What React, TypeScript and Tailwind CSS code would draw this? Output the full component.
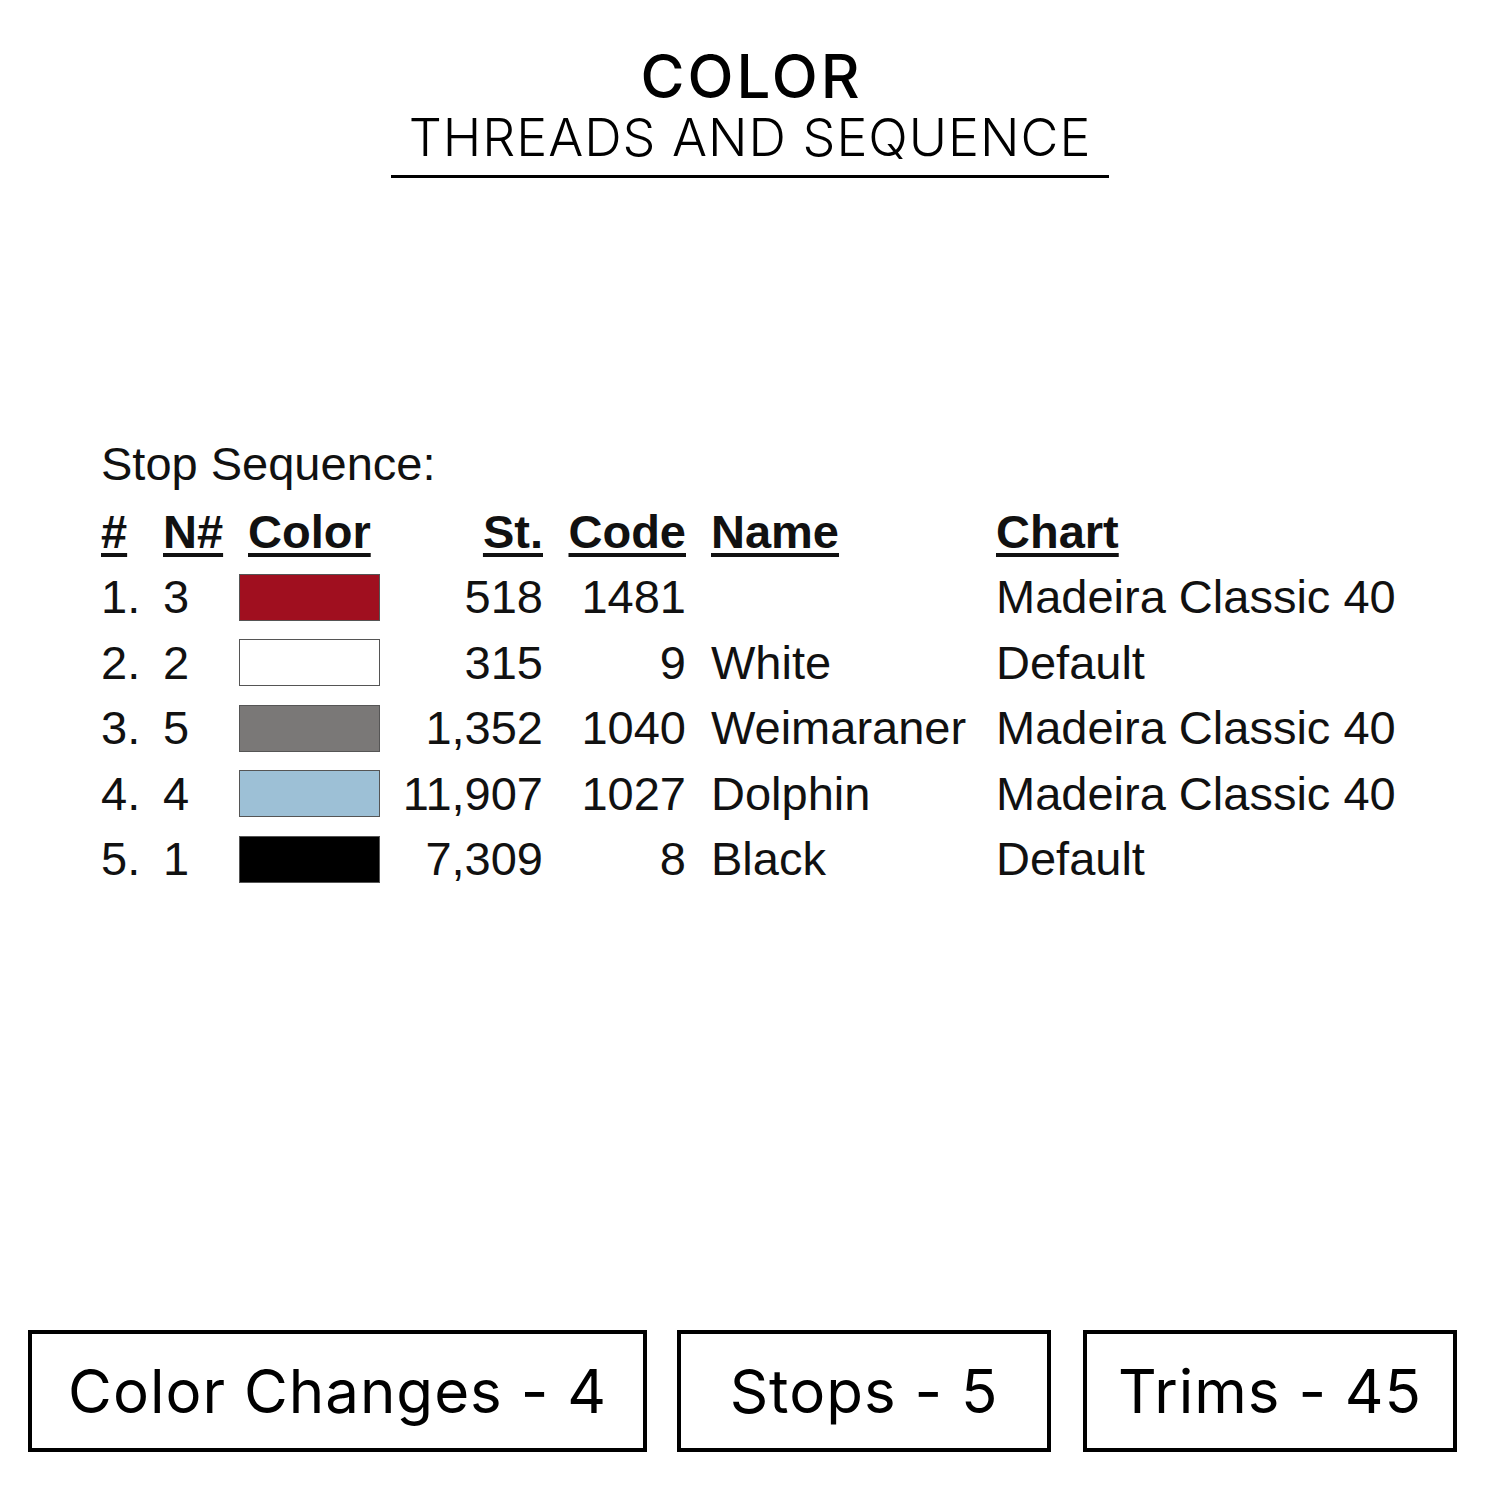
import React from "react";

const rows = [
  { n: "1.", nn: "3", color: "bg-[#a00f1f]", st: "518", code: "1481", name: "", chart: "Madeira Classic 40" },
  { n: "2.", nn: "2", color: "bg-white", st: "315", code: "9", name: "White", chart: "Default" },
  { n: "3.", nn: "5", color: "bg-[#7a7877]", st: "1,352", code: "1040", name: "Weimaraner", chart: "Madeira Classic 40" },
  { n: "4.", nn: "4", color: "bg-[#9dc0d6]", st: "11,907", code: "1027", name: "Dolphin", chart: "Madeira Classic 40" },
  { n: "5.", nn: "1", color: "bg-black", st: "7,309", code: "8", name: "Black", chart: "Default" },
];

const grid = "grid grid-cols-[62px_76px_141px_163px_143px_310px_1fr] items-center h-[65.5px]";
const hdr = "font-bold underline decoration-[4px] underline-offset-[5px]";

export default function App() {
  return (
    <div className="w-[1500px] h-[1500px] bg-white text-black flex flex-col">
      <div className="flex flex-col items-center pt-[44px]">
        <div className="text-[60px] leading-[64px] font-medium font-['Inter',sans-serif] tracking-[3px] pl-[3px]">COLOR</div>
        <div className="text-[52px] leading-[60px] font-light font-['Inter',sans-serif] tracking-[1px] px-[18px] pb-[7px] border-b-[3px] border-black">
          THREADS AND SEQUENCE
        </div>
      </div>

      <div className="mt-[253px] pl-[101px] font-['Liberation_Sans',Arial,sans-serif] text-[47px] text-[#111]">
        <div className="h-[65.5px] flex items-center">Stop Sequence:</div>
        <div className={grid}>
          <div><span className={hdr}>#</span></div>
          <div><span className={hdr}>N#</span></div>
          <div className="pl-[9px]"><span className={hdr}>Color</span></div>
          <div className="text-right"><span className={hdr}>St.</span></div>
          <div className="text-right"><span className={hdr}>Code</span></div>
          <div className="pl-[25px]"><span className={hdr}>Name</span></div>
          <div><span className={hdr}>Chart</span></div>
        </div>
        {rows.map((r) => (
          <div key={r.n} className={grid}>
            <div>{r.n}</div>
            <div>{r.nn}</div>
            <div className={`h-[47px] w-[141px] border border-[#555] ${r.color}`} />
            <div className="text-right">{r.st}</div>
            <div className="text-right">{r.code}</div>
            <div className="pl-[25px]">{r.name}</div>
            <div>{r.chart}</div>
          </div>
        ))}
      </div>

      <div className="mt-auto mb-[48px] flex px-[28px] font-['Inter',sans-serif] text-[60px] tracking-[1px]">
        <div className="w-[619px] h-[122px] border-[4px] border-black flex items-center justify-center">Color Changes - 4</div>
        <div className="ml-[30px] w-[374px] h-[122px] border-[4px] border-black flex items-center justify-center">Stops - 5</div>
        <div className="ml-[32px] w-[374px] h-[122px] border-[4px] border-black flex items-center justify-center">Trims - 45</div>
      </div>
    </div>
  );
}
